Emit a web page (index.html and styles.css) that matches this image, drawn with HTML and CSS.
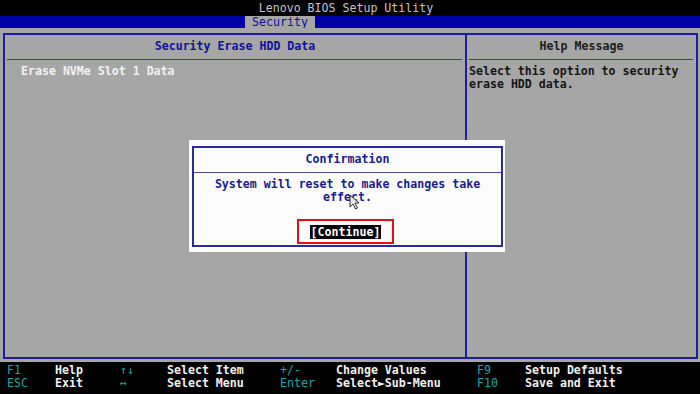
FILE: index.html
```html
<!DOCTYPE html>
<html lang="en">
<head>
    <meta charset="UTF-8">
    <meta name="viewport" content="width=device-width, initial-scale=1.0">
    <title>Lenovo BIOS Setup Utility</title>
    <link rel="stylesheet" href="styles.css">
</head>
<body>
<div class="screen">
    <div class="title-bar">Lenovo BIOS Setup Utility</div>
    <div class="menu-bar">
        <span class="tab">Security</span>
    </div>

    <div class="main">
        <div class="panel">
            <div class="col col-left">
                <div class="col-head head-blue">Security Erase HDD Data</div>
                <div class="col-line"></div>
                <div class="col-body">
                    <div class="item">Erase NVMe Slot 1 Data</div>
                </div>
            </div>
            <div class="col col-right">
                <div class="col-head">Help Message</div>
                <div class="col-line"></div>
                <div class="col-body help-text">
                    Select this option to security<br>
                    erase HDD data.
                </div>
            </div>
        </div>
    </div>

    <div class="footer">
        <span class="key">F1</span><span class="desc">Help</span>
        <span class="key">&#8593;&#8595;</span><span class="desc">Select Item</span>
        <span class="key">+/-</span><span class="desc">Change Values</span>
        <span class="key">F9</span><span class="desc">Setup Defaults</span>
        <span class="key">ESC</span><span class="desc">Exit</span>
        <span class="key">&#8596;</span><span class="desc">Select Menu</span>
        <span class="key">Enter</span><span class="desc">Select&#9658;Sub-Menu</span>
        <span class="key">F10</span><span class="desc">Save and Exit</span>
    </div>

    <!-- popup dialog -->
    <div class="dialog">
        <div class="dialog-inner">
            <div class="dialog-head">Confirmation</div>
            <div class="dialog-text">System will reset to make changes take<br>effect.</div>
            <div class="dialog-actions">
                <div class="btn-frame"><span class="btn">[Continue]</span></div>
            </div>
        </div>
    </div>

    <svg class="cursor" width="11" height="16" viewBox="0 0 11 16">
        <path d="M1 1 L1 13 L4 10 L6.5 15 L8.5 14 L6 9 L10 9 Z" fill="#e8e8e8" stroke="#303030" stroke-width="1"/>
    </svg>
</div>
</body>
</html>
```

FILE: styles.css
```css
body {
    margin: 0;
    padding: 0;
    background-color: #000;
    font-family: "DejaVu Sans Mono", "Liberation Mono", monospace;
    font-weight: bold;
    font-size: 11.6px;
}
.screen {
    position: relative;
    width: 700px;
    height: 394px;
    overflow: hidden;
    display: flex;
    flex-direction: column;
}
.title-bar {
    height: 16px;
    line-height: 17px;
    text-align: center;
    color: #c4c4c4;
    font-weight: normal;
    padding-right: 8px;
}
.menu-bar {
    height: 12px;
    background-color: #0000a8;
    display: flex;
}
.tab {
    margin-left: 245px;
    width: 70px;
    height: 12px;
    line-height: 12px;
    text-align: center;
    background-color: #a6a6a6;
    color: #0c0c9c;
    font-weight: normal;
}
.main {
    height: 334px;
    background-color: #a6a6a6;
    padding: 5px 2px 3px 3px;
    box-sizing: border-box;
}
.panel {
    height: 100%;
    border: 2px solid #1e1e9a;
    box-sizing: border-box;
    display: flex;
}
.col-left {
    width: 460px;
    border-right: 2px solid #1e1e9a;
}
.col-right {
    flex: 1;
}
.col-head {
    height: 24px;
    line-height: 23px;
    text-align: center;
    color: #1c1c1c;
}
.head-blue {
    color: #10109c;
}
.col-line {
    height: 1px;
    background-color: #3a3aa6;
    margin: 0 3px 0 2px;
}
.col-body {
    padding-top: 5px;
    line-height: 13px;
}
.item {
    padding-left: 16px;
    color: #f2f2f2;
}
.help-text {
    padding-left: 2px;
    color: #141414;
}
.footer {
    flex: 1;
    padding: 2px 0 0 7px;
    display: grid;
    grid-template-columns: 48px 65px 47px 113px 56px 141px 48px auto;
    grid-auto-rows: 13px;
    line-height: 13px;
}
.key {
    color: #20a4a4;
    font-weight: normal;
}
.desc {
    color: #f0f0f0;
}
.dialog {
    position: absolute;
    left: 189px;
    top: 140px;
    width: 316px;
    height: 112px;
    background-color: #fbfbfb;
    padding: 6px 2px 5px 3px;
    box-sizing: border-box;
}
.dialog-inner {
    height: 100%;
    border: 2px solid #2a2a9c;
    box-sizing: border-box;
    display: flex;
    flex-direction: column;
    color: #1a1a8c;
}
.dialog-head {
    height: 24px;
    line-height: 22px;
    text-align: center;
    border-bottom: 1px solid #4a4aa8;
}
.dialog-text {
    padding-top: 5px;
    line-height: 13px;
    text-align: center;
}
.dialog-actions {
    display: flex;
    justify-content: center;
    padding-top: 15px;
    padding-right: 4px;
}
.btn-frame {
    width: 97px;
    height: 25px;
    border: 2px solid #e3101a;
    box-sizing: border-box;
    display: flex;
    align-items: center;
    justify-content: center;
}
.btn {
    background-color: #000;
    color: #fff;
    line-height: 14px;
    padding: 0 1px;
}
.cursor {
    position: absolute;
    left: 349px;
    top: 194px;
}
```
